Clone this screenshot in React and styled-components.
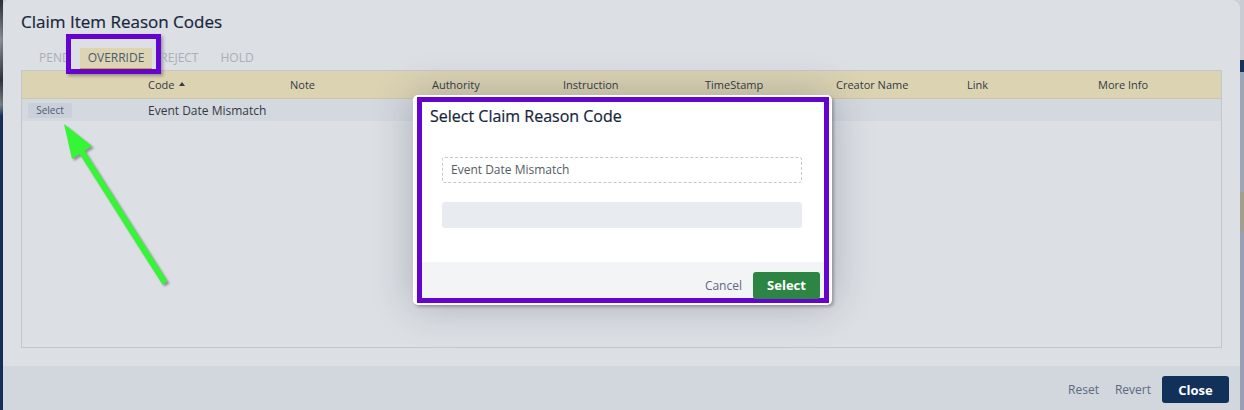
import React from "react";
import styled, { createGlobalStyle } from "styled-components";

const GlobalStyle = createGlobalStyle`
  html, body {
    margin: 0;
    padding: 0;
    overflow: hidden;
    background: #dcdfe4;
  }
  body {
    font-family: "Open Sans", "Liberation Sans", sans-serif;
  }
`;

const Page = styled.div`
  position: relative;
  width: 1244px;
  height: 410px;
  display: flex;
  overflow: hidden;
`;

const LeftStrip = styled.div`
  width: 3px;
  background: linear-gradient(
    to bottom,
    #2b2f38 0px,
    #8d939c 40px,
    #30353f 80px,
    #7f858e 105px,
    #17335e 116px,
    #17335e 100%
  );
`;

const RightStrip = styled.div`
  width: 4px;
  background: linear-gradient(
    to bottom,
    #c9ccd2 0px,
    #c9ccd2 60px,
    #16325c 60px,
    #16325c 72px,
    #9ea6b6 72px,
    #9ea6b6 192px,
    #a29f8f 192px,
    #a29f8f 232px,
    #99a0b4 232px,
    #99a0b4 100%
  );
`;

const Dialog = styled.div`
  flex: 1;
  display: flex;
  flex-direction: column;
  background: #dcdfe4;
  border-radius: 5px 7px 0 0;
  box-shadow: 0 0 4px rgba(0, 0, 0, 0.25);
`;

const Body = styled.div`
  flex: 1;
  display: flex;
  flex-direction: column;
  padding: 10px 18px 18px;
`;

const Title = styled.h1`
  margin: 0;
  font-size: 17px;
  line-height: 23px;
  font-weight: 500;
  color: #16253a;
  -webkit-text-stroke: 0.2px #16253a;
`;

const Tabs = styled.div`
  display: flex;
  margin-top: 15px;
  padding-left: 10px;
  height: 22px;
`;

const Tab = styled.div`
  position: relative;
  padding: 0 8px;
  margin-right: ${(p) => p.$gap || 0}px;
  font-size: 12px;
  line-height: 20px;
  text-transform: uppercase;
  color: ${(p) => (p.$active ? "#4b5a6e" : "#a9aeb7")};
  background: ${(p) => (p.$active ? "#ddd4b4" : "transparent")};
  border-bottom: 2px solid ${(p) => (p.$active ? "#d6a21c" : "transparent")};

  ${(p) =>
    p.$highlight &&
    `
    &::after {
      content: "";
      position: absolute;
      top: -14px;
      left: -14px;
      right: -9px;
      bottom: -6px;
      border: 5px solid #6604cf;
      box-shadow: 2px 2px 3px rgba(0, 0, 0, 0.3);
    }
  `}
`;

const Table = styled.div`
  flex: 1;
  display: flex;
  flex-direction: column;
  border: 1px solid #c2c7cf;
`;

const columns = "126px 142px 142px 131px 142px 131px 131px 131px 1fr";

const HeaderRow = styled.div`
  display: grid;
  grid-template-columns: ${columns};
  height: 27px;
  align-items: center;
  background: #dcd3b3;
  border-bottom: 1px solid #cfc6a6;
  font-size: 11px;
  color: #333a44;
`;

const HeaderCell = styled.div`
  display: flex;
  align-items: center;
  gap: 5px;
  white-space: nowrap;
`;

const SortCaret = styled.span`
  width: 0;
  height: 0;
  border-left: 3px solid transparent;
  border-right: 3px solid transparent;
  border-bottom: 4px solid #333a44;
  margin-top: -2px;
`;

const Row = styled.div`
  display: grid;
  grid-template-columns: ${columns};
  height: 22px;
  align-items: center;
  background: #d4d8df;
  font-size: 12px;
  color: #333a44;
`;

const RowButton = styled.button`
  justify-self: start;
  margin-left: 6px;
  width: 44px;
  height: 15px;
  padding: 0;
  border: none;
  border-radius: 2px;
  background: #c9d0d9;
  font-family: inherit;
  font-size: 10px;
  line-height: 15px;
  color: #4b5b72;
`;

const Footer = styled.div`
  height: 44px;
  display: flex;
  align-items: center;
  justify-content: flex-end;
  padding: 3px 11px 0;
  box-sizing: border-box;
  background: #d2d6dd;
`;

const LinkButton = styled.span`
  font-size: 12px;
  color: #5b6a80;
  margin-right: ${(p) => p.$gap}px;
`;

const PrimaryButton = styled.button`
  height: 27px;
  padding: 0;
  width: ${(p) => p.$width}px;
  border: none;
  border-radius: 3px;
  background: ${(p) => p.$bg};
  color: #fff;
  font-family: inherit;
  font-weight: 700;
  font-size: 13px;
`;

const ModalShell = styled.div`
  position: absolute;
  left: 413px;
  top: 95px;
  width: 419px;
  box-sizing: border-box;
  padding: 2px 3px 2px 4px;
  background: #fff;
  border-radius: 5px;
  box-shadow: 0 0 40px rgba(40, 50, 70, 0.28), 2px 2px 3px rgba(0, 0, 0, 0.25);
`;

const ModalFrame = styled.div`
  border: 5px solid #6604cf;
  display: flex;
  flex-direction: column;
`;

const ModalTitle = styled.h2`
  margin: 0;
  padding: 3px 8px 0;
  font-size: 16px;
  line-height: 22px;
  font-weight: 500;
  color: #16253a;
  -webkit-text-stroke: 0.2px #16253a;
`;

const ModalBody = styled.div`
  display: flex;
  flex-direction: column;
  gap: 19px;
  padding: 30px 22px 34px 20px;
`;

const Field = styled.div`
  height: 26px;
  box-sizing: border-box;
  padding: 0 8px;
  border: 1px dashed #c3c7cd;
  border-radius: 3px;
  font-size: 12px;
  line-height: 24px;
  color: #555c66;
`;

const Bar = styled.div`
  height: 26px;
  border-radius: 3px;
  background: #e8ebef;
`;

const ModalFooter = styled.div`
  height: 36px;
  box-sizing: border-box;
  padding: 10px 4px 0;
  display: flex;
  justify-content: flex-end;
  align-items: center;
  background: #f3f4f6;
`;

const Arrow = styled.svg`
  position: absolute;
  left: 0;
  top: 0;
  pointer-events: none;
  filter: drop-shadow(2px 2px 1px rgba(0, 0, 0, 0.35));
`;

const headers = ["Note", "Authority", "Instruction", "TimeStamp", "Creator Name", "Link", "More Info"];

export default function App() {
  return (
    <>
      <GlobalStyle />
      <Page>
        <LeftStrip />
        <Dialog>
          <Body>
            <Title>Claim Item Reason Codes</Title>
            <Tabs>
              <Tab $gap={1}>Pend</Tab>
              <Tab $active $highlight>Override</Tab>
              <Tab $gap={6}>Reject</Tab>
              <Tab>Hold</Tab>
            </Tabs>
            <Table>
              <HeaderRow>
                <div />
                <HeaderCell>
                  Code <SortCaret />
                </HeaderCell>
                {headers.map((h) => (
                  <HeaderCell key={h}>{h}</HeaderCell>
                ))}
              </HeaderRow>
              <Row>
                <RowButton>Select</RowButton>
                <div>Event Date Mismatch</div>
              </Row>
            </Table>
          </Body>
          <Footer>
            <LinkButton $gap={16}>Reset</LinkButton>
            <LinkButton $gap={11}>Revert</LinkButton>
            <PrimaryButton $bg="#11305a" $width={67}>Close</PrimaryButton>
          </Footer>
        </Dialog>
        <RightStrip />

        <ModalShell>
          <ModalFrame>
            <ModalTitle>Select Claim Reason Code</ModalTitle>
            <ModalBody>
              <Field>Event Date Mismatch</Field>
              <Bar />
            </ModalBody>
            <ModalFooter>
              <LinkButton $gap={11}>Cancel</LinkButton>
              <PrimaryButton $bg="#2d8543" $width={67}>Select</PrimaryButton>
            </ModalFooter>
          </ModalFrame>
        </ModalShell>

        <Arrow width="1244" height="410" viewBox="0 0 1244 410">
          <line x1="165" y1="283" x2="80" y2="149" stroke="#36f536" strokeWidth="6" />
          <polygon points="64,124 92,146 72,159" fill="#36f536" />
        </Arrow>
      </Page>
    </>
  );
}
